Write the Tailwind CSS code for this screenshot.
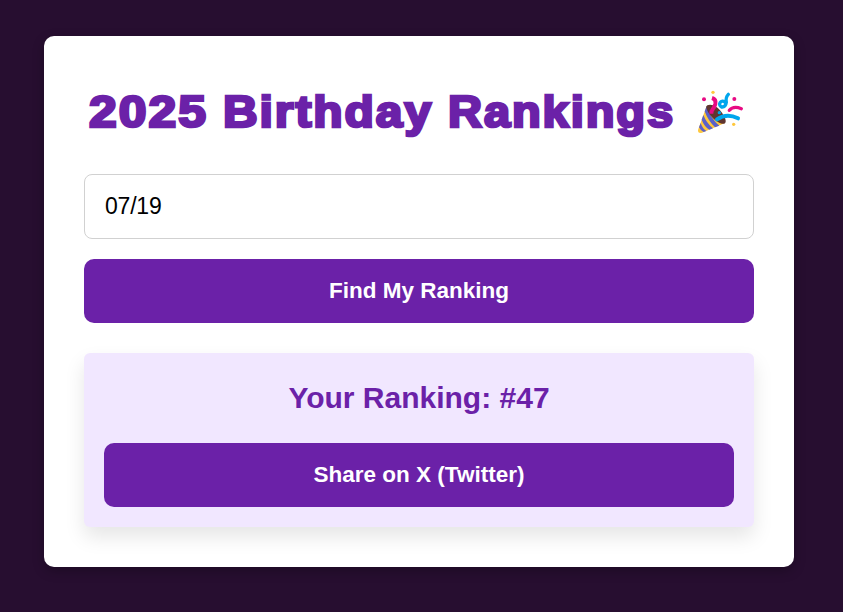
<!DOCTYPE html>
<html lang="en">
<head>
<meta charset="utf-8">
<title>2025 Birthday Rankings</title>
<script src="https://cdn.jsdelivr.net/npm/@tailwindcss/browser@4"></script>
</head>
<body class="h-[612px] overflow-hidden bg-[#270e30] px-11 pt-9 font-['Liberation_Sans',Arial,sans-serif]">
<main class="h-[531px] w-[750px] rounded-[10px] bg-white px-10 pt-10 shadow-[0_4px_12px_rgba(0,0,0,0.25)]">
  <h1 class="flex h-[98px] items-start">
    <svg class="h-[72px] w-[600px] fill-[#6b21a8] stroke-[#6b21a8] text-[44.5px] font-bold tracking-[1.8px]" viewBox="0 0 600 72" stroke-width="2.7" stroke-linejoin="miter">
      <text x="5" y="51" textLength="119" lengthAdjust="spacingAndGlyphs">2025</text>
      <text x="139" y="51" textLength="210" lengthAdjust="spacingAndGlyphs">Birthday</text>
      <text x="364" y="51" textLength="227" lengthAdjust="spacingAndGlyphs">Rankings</text>
    </svg>
    <svg class="mt-[12px] ml-[10px] h-[48px] w-[52px]" viewBox="0 0 156 144" fill="none" stroke-linecap="round">
      <path d="M38 54L12 126Q11 137 24 134L91 106Z" fill="#ffc83d"/>
      <path d="M32 70Q42 98 63 118L76 113Q49 91 38 54ZM23 95Q31 116 46 125L57 121Q38 106 28 81ZM15 118Q20 128 29 132L37 129Q25 121 20 105Z" fill="#5a61c9"/>
      <path d="M40 52C54 46 72 57 84 74C95 90 99 103 91 107C82 110 62 98 51 84C39 70 33 56 40 52Z" fill="#60352f"/>
      <path d="M54 30Q67 34 64 48Q62 56 56 64Q52 69 52 77" stroke="#e80a83" stroke-width="12" stroke-linecap="butt"/>
      <path d="M69 94Q98 74 132 91" stroke="#00a6ed" stroke-width="12"/>
      <path d="M103 19Q94 28 97 43Q95 58 83 57Q73 51 79 43Q86 34 96 46" stroke="#00a6ed" stroke-width="10"/>
      <path d="M106 67Q118 52 142 62" stroke="#e80a83" stroke-width="10"/>
      <circle cx="30" cy="34" r="6" fill="#e80a83"/><circle cx="121" cy="33" r="6" fill="#e80a83"/>
      <circle cx="57" cy="13" r="5" fill="#ffc83d"/><circle cx="119" cy="109" r="5" fill="#ffc83d"/>
      <circle cx="76" cy="74" r="5" fill="#00a6ed"/>
    </svg>
  </h1>
  <input aria-label="Birthday" value="07/19" class="block h-[65px] w-full rounded-lg border border-[#d1d1d1] px-5 pb-px text-[23px] tracking-[-0.2px] text-black">
  <button class="mt-5 block h-16 w-full rounded-[10px] bg-[#6b21a8] pb-px text-[22.5px] font-bold text-white">Find My Ranking</button>
  <section class="mt-[30px] h-[174px] rounded-md bg-[#f1e7ff] px-5 pt-[26px] shadow-[0_10px_20px_rgba(0,0,0,0.1)]">
    <h2 class="h-16 text-center text-[30px] leading-[38px] font-bold text-[#6b21a8]">Your Ranking: #47</h2>
    <button class="block h-16 w-full rounded-[10px] bg-[#6b21a8] pb-px text-[22.5px] font-bold text-white">Share on X (Twitter)</button>
  </section>
</main>
</body>
</html>
